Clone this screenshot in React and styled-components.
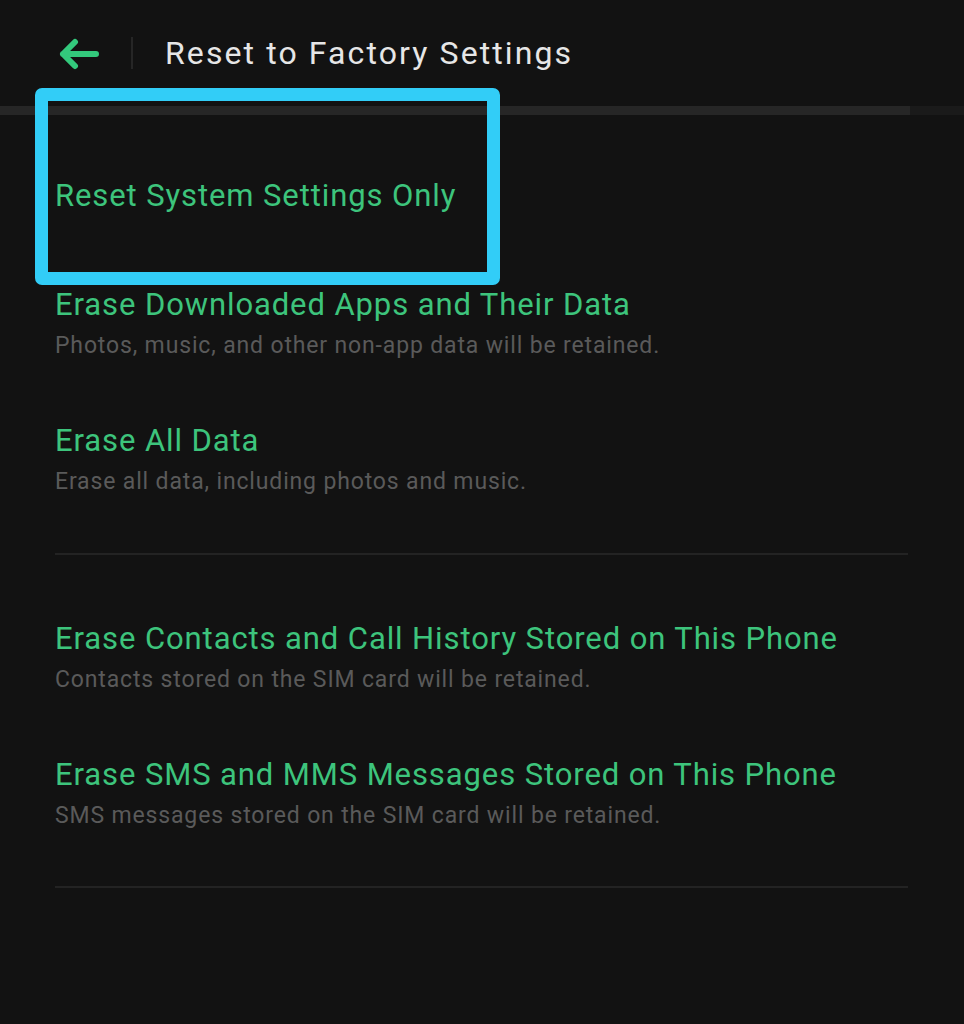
import React from "react";
import styled, { createGlobalStyle } from "styled-components";

const items = [
  { title: "Reset System Settings Only", tall: true },
  {
    title: "Erase Downloaded Apps and Their Data",
    sub: "Photos, music, and other non-app data will be retained.",
  },
  { title: "Erase All Data", sub: "Erase all data, including photos and music." },
  "divider",
  {
    title: "Erase Contacts and Call History Stored on This Phone",
    sub: "Contacts stored on the SIM card will be retained.",
  },
  {
    title: "Erase SMS and MMS Messages Stored on This Phone",
    sub: "SMS messages stored on the SIM card will be retained.",
  },
];

export default function App() {
  return (
    <Screen>
      <GlobalStyle />
      <Header>
        <BackArrow width="42" height="32" viewBox="0 0 42 32">
          <path
            d="M38 16 H5 M5 16 L17 4 M5 16 L17 28"
            fill="none"
            stroke="#33c97c"
            strokeWidth="6"
            strokeLinecap="round"
            strokeLinejoin="round"
          />
        </BackArrow>
        <Separator />
        <Title>Reset to Factory Settings</Title>
      </Header>
      <Band />

      <List>
        {items.map((item, i) =>
          item === "divider" ? (
            <Divider key={i} />
          ) : (
            <Item key={i} $tall={item.tall}>
              <ItemTitle>{item.title}</ItemTitle>
              {item.sub && <ItemSub>{item.sub}</ItemSub>}
            </Item>
          )
        )}
        <Divider $last />
      </List>

      <Highlight />
    </Screen>
  );
}

/*--- CSS ---*/

const GlobalStyle = createGlobalStyle`
  html, body {
    margin: 0;
    padding: 0;
    background: #121212;
  }
  body {
    font-family: Roboto, "Noto Sans", sans-serif;
  }
`;

const Screen = styled.div`
  position: relative;
  width: 964px;
  height: 1024px;
  background: #121212;
  overflow: hidden;
`;

const Header = styled.div`
  height: 106px;
  display: flex;
  align-items: center;
  padding-left: 58px;
  box-sizing: border-box;
`;

const BackArrow = styled.svg`
  display: block;
  margin-top: 2px;
`;

const Separator = styled.div`
  width: 2px;
  height: 32px;
  background: #262626;
  margin: 0 32px 0 31px;
`;

const Title = styled.div`
  color: #e6e6e6;
  font-size: 32px;
  line-height: 40px;
  letter-spacing: 2.1px;
`;

const Band = styled.div`
  height: 9px;
  background: linear-gradient(to right, #262626 0 910px, #1a1a1a 910px);
`;

const List = styled.div`
  padding: 33px 56px 0 55px;
`;

const Item = styled.div`
  padding: ${(p) => (p.$tall ? "30px 0 43px" : "30px 0")};
`;

const ItemTitle = styled.div`
  color: #3dc47c;
  font-size: 31px;
  line-height: 36px;
  letter-spacing: 0.9px;
  white-space: nowrap;
`;

const ItemSub = styled.div`
  color: #5a5a5a;
  font-size: 23px;
  line-height: 34px;
  letter-spacing: 0.85px;
  margin-top: 6px;
  white-space: nowrap;
`;

const Divider = styled.div`
  height: 2px;
  background: #232323;
  margin: ${(p) => (p.$last ? "23px 0 0" : "24px 0 36px")};
`;

const Highlight = styled.div`
  position: absolute;
  left: 35px;
  top: 88px;
  width: 465px;
  height: 197px;
  box-sizing: border-box;
  border: 13px solid #32cdf7;
  border-radius: 7px;
  pointer-events: none;
`;
